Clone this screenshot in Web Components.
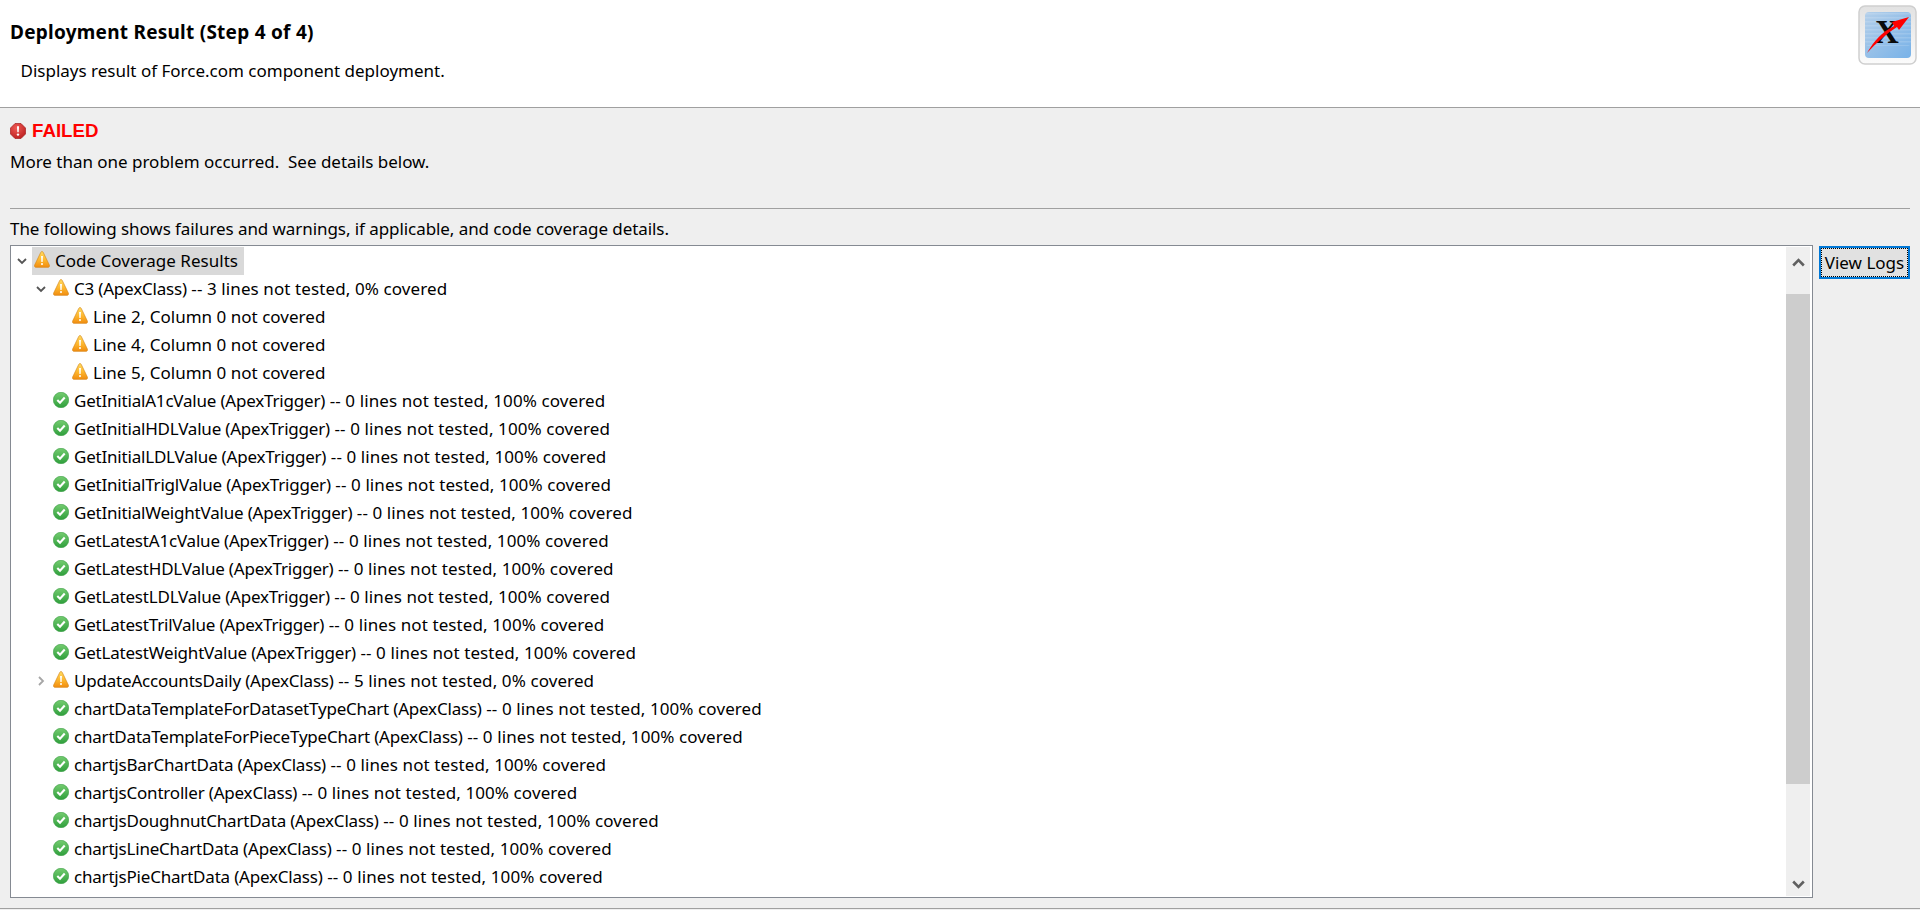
<!DOCTYPE html><html><head><meta charset="utf-8"><style>
html,body{margin:0;height:100%;overflow:hidden;background:#efefef}
body{font:17px/28px "Noto Sans",sans-serif;color:#000}
</style></head><body>
<deploy-page>
<wizard-header slot="header" title="Deployment Result (Step 4 of 4)" description="Displays result of Force.com component deployment."></wizard-header>
<status-banner slot="status" label="FAILED" message="More than one problem occurred.  See details below."></status-banner>
<span slot="note">The following shows failures and warnings, if applicable, and code coverage details.</span>
<coverage-tree slot="tree" id="tree"></coverage-tree>
<focus-button slot="action">View Logs</focus-button>
</deploy-page>
<script>
const WARN=`<svg width="16" height="17" viewBox="0 0 17 16" preserveAspectRatio="none"><defs><linearGradient id="w" x1="0" y1="0" x2="0" y2="1"><stop offset="0" stop-color="#ffdc62"/><stop offset=".55" stop-color="#fdb52c"/><stop offset="1" stop-color="#f08c10"/></linearGradient></defs><path d="M8.5 .5c.6 0 1 .3 1.3.8l6.500 11.900c.5 1 0 2.200-1.200 2.200H1.900c-1.200 0-1.700-1.200-1.200-2.200L7.200 1.300c.3-.5.700-.8 1.300-.8z" fill="url(#w)" stroke="#d98a1c" stroke-width=".7"/><path d="M7.500 4.800h2l-.35 5.600h-1.300z" fill="#fff"/><circle cx="8.500" cy="12.300" r="1.050" fill="#fff"/></svg>`;
const OK=`<svg width="16" height="16" viewBox="0 0 16 16"><defs><linearGradient id="g" x1="0" y1="0" x2="0" y2="1"><stop offset="0" stop-color="#74cc70"/><stop offset="1" stop-color="#2f9f3c"/></linearGradient></defs><circle cx="8" cy="8" r="7.700" fill="url(#g)" stroke="#3a9e45" stroke-width=".6"/><path d="M4.300 8.100l2.700 2.700 4.700-5.300" fill="none" stroke="#fff" stroke-width="2.100"/></svg>`;
const OPEN=`<svg width="10" height="7" viewBox="0 0 10 7"><path d="M1 1l4 4 4-4" fill="none" stroke="#555" stroke-width="1.800"/></svg>`;
const CLOSED=`<svg width="7" height="10" viewBox="0 0 7 10"><path d="M1 1l4 4-4 4" fill="none" stroke="#a6a6a6" stroke-width="1.800"/></svg>`;

class Base extends HTMLElement{
  render(html){(this.shadowRoot||this.attachShadow({mode:'open'})).innerHTML=html}
}
customElements.define('deploy-page',class extends Base{connectedCallback(){this.render(`<style>
:host{display:flex;flex-direction:column;height:910px;box-sizing:border-box}
.panel{flex:1;display:flex;flex-direction:column;padding:9px 10px 0}
hr{border:0;border-top:1px solid #a0a0a0;margin:32px 0 0;height:0}
.note{height:36px;line-height:40px;white-space:pre;letter-spacing:-.07px}
.main{display:flex;gap:6px;height:653px}
.side{width:91px;padding-top:1px}
footer{height:1px;border-top:1px solid #a0a0a0;margin:10px -10px 0}
</style><slot name="header"></slot><div class="panel"><slot name="status"></slot><hr>
<div class="note"><slot name="note"></slot></div>
<div class="main"><slot name="tree"></slot><div class="side"><slot name="action"></slot></div></div>
<footer></footer></div>`)}});
customElements.define('wizard-header',class extends Base{connectedCallback(){this.render(`<style>
:host{display:flex;justify-content:space-between;height:107px;background:#fff;border-bottom:1px solid #a0a0a0;flex:none}
.t{padding:16px 0 0 10px}
h1{margin:0;font:700 19px/32px "Noto Sans",sans-serif;letter-spacing:.25px;color:#000}
p{margin:7px 0 0 10.500px;line-height:32px}
.logo{margin:5px 3px 0 0;width:59px;height:60px}
</style><div class="t"><h1>${this.getAttribute('title')}</h1><p>${this.getAttribute('description')}</p></div>
<div class="logo"><svg width="59" height="60" viewBox="0 0 59 60"><defs>
<linearGradient id="b" x1="0" y1="0" x2="1" y2="1"><stop offset="0" stop-color="#b3cfea"/><stop offset=".5" stop-color="#96c0e8"/><stop offset="1" stop-color="#78b2e8"/></linearGradient>
<linearGradient id="f" x1="0" y1="0" x2="0" y2="1"><stop offset="0" stop-color="#e2e2e2"/><stop offset="1" stop-color="#fbfbfb"/></linearGradient>
<pattern id="l" width="4" height="4" patternUnits="userSpaceOnUse"><rect width="4" height="1.500" fill="#fff" opacity=".14"/></pattern></defs>
<rect x="1" y="1" width="57" height="58" rx="6" fill="url(#f)" stroke="#cfcfcf" stroke-width="1.500"/>
<rect x="7" y="7" width="46" height="46" rx="4" fill="url(#b)"/><rect x="7" y="7" width="46" height="34" rx="4" fill="url(#l)"/>
<text x="17" y="38" font-family="Liberation Serif" font-weight="700" font-size="33" fill="#0b0b0b">X</text>
<path d="M9 48C16 36 24 27 36 21L34 17 51 12 41 25 39 22C28 29 18 38 9 48z" fill="#f00"/></svg></div>`)}});
customElements.define('status-banner',class extends Base{connectedCallback(){this.render(`<style>
:host{display:block}
.s{display:flex;align-items:center;gap:6px;height:28px}
b{font:700 18.700px/28px "Liberation Sans",sans-serif;color:#f00}
p{margin:3px 0 0;height:28px;line-height:28px;white-space:pre;letter-spacing:-.02px}
svg{display:block;margin-top:-1px}
</style><div class="s"><svg width="16" height="16" viewBox="0 0 16 16"><defs><radialGradient id="r" cx=".4" cy=".3" r=".8"><stop offset="0" stop-color="#f05a55"/><stop offset="1" stop-color="#b81c1c"/></radialGradient></defs><path d="M5 .5h6L15.500 5v6L11 15.500H5L.5 11V5z" fill="url(#r)" stroke="#a52020" stroke-width=".7" stroke-linejoin="round"/><path d="M7 3.300h2l-.3 6H7.300z" fill="#fff"/><circle cx="8" cy="11.600" r="1.200" fill="#fff"/></svg><b>${this.getAttribute('label')}</b></div><p>${this.getAttribute('message')}</p>`)}});
customElements.define('coverage-tree',class extends Base{connectedCallback(){this.render(`<style>
:host{display:flex;box-sizing:border-box;width:1803px;height:653px;border:1px solid #858a92;background:#fff;padding:1px;overflow:hidden}
.rows{flex:1;overflow:hidden;min-width:0}
.bar{width:24px;margin-right:1px;background:#efefef;display:grid;grid-template-rows:47px 490px 1fr;justify-items:center;align-items:start}
.thumb{width:24px;height:100%;background:#cdcdcd}
</style><div class="rows"><slot></slot></div><div class="bar"><svg width="13" height="9" viewBox="0 0 13 9" style="margin-top:11px"><path d="M1.200 7.500L6.500 2.200l5.300 5.300" fill="none" stroke="#606060" stroke-width="2.600"/></svg><div class="thumb"></div><svg width="13" height="9" viewBox="0 0 13 9" style="margin-top:96px"><path d="M1.200 1.500L6.500 6.800l5.300-5.300" fill="none" stroke="#606060" stroke-width="2.600"/></svg></div>`)}});
customElements.define('tree-row',class extends Base{connectedCallback(){
 const lvl=+this.getAttribute('level'),t=this.getAttribute('toggle'),ic=this.getAttribute('icon'),split=this.hasAttribute('split');
 this.render(`<style>
:host{display:flex;align-items:center;height:28px;white-space:pre;padding-left:${lvl*19}px}
.tg{width:20px;display:flex;justify-content:center;flex:none}
.c{display:flex;align-items:center;gap:5px;height:28px;padding:0 6px 0 2px}
.c.sel{background:#d9d9d9}
.i{display:block;height:17px;width:16px;margin-top:${ic=='ok'?-1:-3}px}
svg{display:block}
.n{letter-spacing:${split?-.2:.02}px}
.d{letter-spacing:.1px}
</style><span class="tg">${t=='open'?OPEN:t=='closed'?CLOSED:''}</span><span class="c ${this.hasAttribute('selected')?'sel':''}"><span class="i">${ic=='ok'?OK:WARN}</span><span><span class="n"><slot name="name"></slot></span><span class="d"><slot name="detail"></slot></span></span></span>`)}});
customElements.define('focus-button',class extends Base{connectedCallback(){this.render(`<style>
:host{display:block;box-sizing:border-box;width:91px;height:33px;border:2px solid #0078d7;background:#e1e1e1;font-size:17px}
.f{box-sizing:border-box;height:29px;border:1px dotted #000;display:flex;align-items:center;justify-content:center;white-space:nowrap;line-height:27px}
</style><div class="f"><slot></slot></div>`)}});
const tree=document.getElementById('tree');
const T=' (ApexTrigger)',C=' (ApexClass)',full=' -- 0 lines not tested, 100% covered';
const rows=[
[0,'warn','open','Code Coverage Results',''],
[1,'warn','open','C3'+C,' -- 3 lines not tested, 0% covered'],
[2,'warn','','Line 2, Column 0 not covered',''],
[2,'warn','','Line 4, Column 0 not covered',''],
[2,'warn','','Line 5, Column 0 not covered',''],
...['GetInitialA1cValue','GetInitialHDLValue','GetInitialLDLValue','GetInitialTriglValue','GetInitialWeightValue','GetLatestA1cValue','GetLatestHDLValue','GetLatestLDLValue','GetLatestTrilValue','GetLatestWeightValue'].map(n=>[1,'ok','',n+T,full]),
[1,'warn','closed','UpdateAccountsDaily'+C,' -- 5 lines not tested, 0% covered'],
...['chartDataTemplateForDatasetTypeChart','chartDataTemplateForPieceTypeChart','chartjsBarChartData','chartjsController','chartjsDoughnutChartData','chartjsLineChartData','chartjsPieChartData'].map(n=>[1,'ok','',n+C,full])];
rows.forEach(([l,i,t,n,d],k)=>{const r=document.createElement('tree-row');r.setAttribute('level',l);r.setAttribute('icon',i);if(t)r.setAttribute('toggle',t);if(k==0)r.setAttribute('selected','');if(d)r.setAttribute('split','');
 const a=document.createElement('span');a.slot='name';a.textContent=n;r.append(a);
 if(d){const b=document.createElement('span');b.slot='detail';b.textContent=d;r.append(b)}
 tree.append(r)});
</script></body></html>
